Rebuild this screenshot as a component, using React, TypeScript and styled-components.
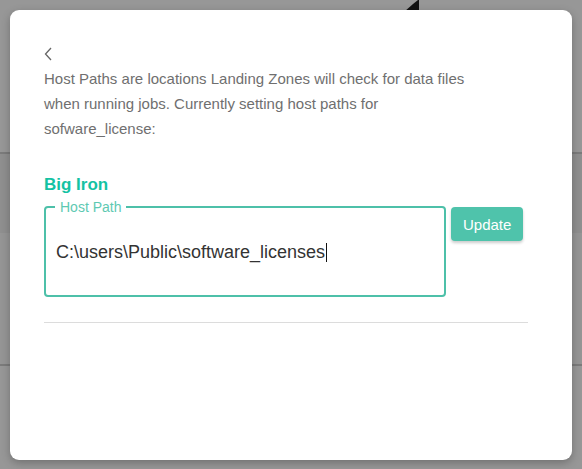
import React from 'react';
import styled, { createGlobalStyle } from 'styled-components';

const GlobalStyle = createGlobalStyle`
  html, body {
    margin: 0;
    padding: 0;
    background: #979797;
    font-family: 'Liberation Sans', Arial, sans-serif;
  }
`;

const Page = styled.div`
  position: relative;
  width: 582px;
  height: 469px;
  overflow: hidden;
  background: #979797;
`;

const BackRow = styled.div<{ h: number; shade: string; line?: string }>`
  height: ${p => p.h}px;
  background: ${p => p.shade};
  border-bottom: ${p => (p.line ? `2px solid ${p.line}` : 'none')};
`;

const Pointer = styled.svg`
  position: absolute;
  left: 404px;
  top: 0;
`;

const Modal = styled.div`
  position: absolute;
  left: 10px;
  top: 10px;
  width: 562px;
  height: 450px;
  box-sizing: border-box;
  background: #fff;
  border-radius: 9px;
  box-shadow: 0 3px 8px rgba(0, 0, 0, 0.25);
  padding: 36px 44px 0 34px;
  display: flex;
  flex-direction: column;
`;

const BackButton = styled.button`
  background: none;
  border: none;
  padding: 0;
  width: 12px;
  height: 16px;
  cursor: pointer;
  display: flex;
  align-items: center;
`;

const Intro = styled.p`
  margin: 4px 0 0;
  max-width: 440px;
  font-size: 15px;
  line-height: 25px;
  color: #6f6f6f;
`;

const ClusterName = styled.h3`
  margin: 34px 0 0;
  font-size: 17px;
  line-height: 20px;
  font-weight: 700;
  color: #14c2a3;
`;

const FieldRow = styled.div`
  display: flex;
  align-items: flex-start;
  gap: 5px;
  margin-top: 5px;
`;

const Field = styled.fieldset`
  margin: 0;
  width: 402px;
  height: 97px;
  box-sizing: border-box;
  border: 2px solid #4dc0a9;
  border-radius: 4px;
  padding: 0 10px;
  display: flex;
  align-items: center;
`;

const Legend = styled.legend`
  font-size: 14px;
  color: #5ec9b2;
  padding: 0 5px;
  margin-left: -1px;
  line-height: 14px;
`;

const PathInput = styled.div`
  font-size: 18px;
  color: #333;
  margin-top: -4px;
  display: flex;
  align-items: center;
`;

const Caret = styled.span`
  display: inline-block;
  width: 1px;
  height: 19px;
  margin-left: 1px;
  background: #111;
`;

const UpdateButton = styled.button`
  margin-top: 7px;
  height: 34px;
  padding: 0 12px;
  border: none;
  border-radius: 4px;
  background: #4fc3ab;
  color: #fff;
  font-family: inherit;
  font-size: 15px;
  box-shadow: 0 2px 3px rgba(0, 0, 0, 0.2);
  cursor: pointer;
`;

const Divider = styled.hr`
  margin: 25px 0 0;
  border: none;
  border-top: 1px solid #dcdcdc;
`;

export default function App() {
  return (
    <Page>
      <GlobalStyle />
      <BackRow h={152} shade="#979797" line="#7b7b7b" />
      <BackRow h={79} shade="#8f8f8f" />
      <BackRow h={131} shade="#959595" line="#7b7b7b" />
      <Pointer width="20" height="12" viewBox="0 0 20 12">
        <path d="M0 12 L9 4 L14 0 L15 0 L15 12 Z" fill="#111" />
      </Pointer>
      <Modal>
        <div>
          <BackButton aria-label="Back">
            <svg width="9" height="14" viewBox="0 0 9 14">
              <polyline points="7,1 1.5,7 7,13" fill="none" stroke="#666" strokeWidth="1.3" />
            </svg>
          </BackButton>
        </div>
        <Intro>
          Host Paths are locations Landing Zones will check for data files when running jobs.
          Currently setting host paths for sofware_license:
        </Intro>
        <ClusterName>Big Iron</ClusterName>
        <FieldRow>
          <Field>
            <Legend>Host Path</Legend>
            <PathInput>
              C:\users\Public\software_licenses
              <Caret />
            </PathInput>
          </Field>
          <UpdateButton>Update</UpdateButton>
        </FieldRow>
        <Divider />
      </Modal>
    </Page>
  );
}
